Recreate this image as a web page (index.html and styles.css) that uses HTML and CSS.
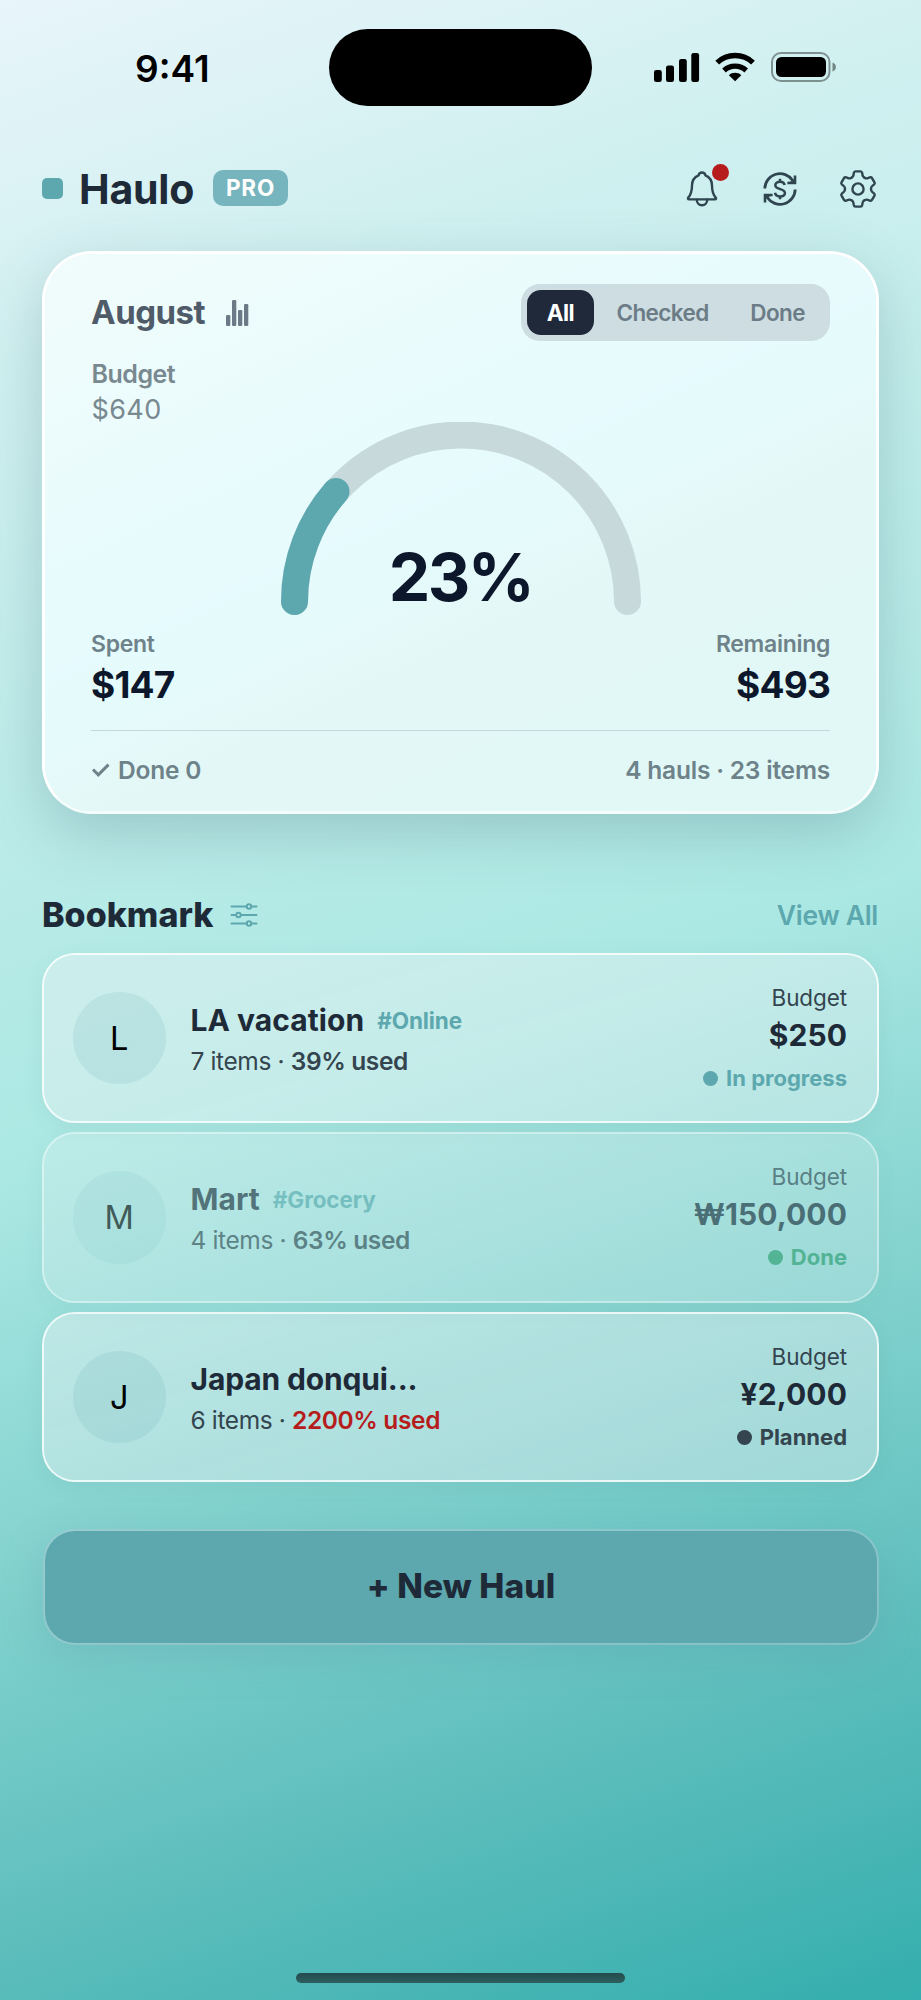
FILE: index.html
```html
<!DOCTYPE html>
<html lang="en">
<head>
<meta charset="utf-8">
<title>Haulo</title>
<link rel="stylesheet" href="styles.css">
</head>
<body>
<main class="screen">
  <div class="status-bar">
    <span class="time">9:41</span>
    <span class="island"></span>
    <svg class="status-icons" width="184" height="32" viewBox="0 0 184 32">
      <rect x="1" y="19" width="7.8" height="12" rx="2.2"/>
      <rect x="13" y="14.5" width="8" height="16.5" rx="2.2"/>
      <rect x="26" y="8" width="7.8" height="23" rx="2.2"/>
      <rect x="38.3" y="2" width="7.8" height="29" rx="2.2"/>
      <g fill="none" stroke="#000" stroke-width="5.4">
        <path d="M64.2 11.6A26 26 0 0 1 100 11.6"/>
        <path d="M71 19.4A16.5 16.5 0 0 1 93.200 19.4"/>
      </g>
      <path d="M82.100 30.300L75.900 24.200C79.300 21 84.900 21 88.300 24.200Z"/>
      <rect x="119" y="2" width="57.500" height="28" rx="9" fill="none" stroke="#000" stroke-opacity=".4" stroke-width="2"/>
      <rect x="123" y="6" width="50" height="20" rx="5.500"/>
      <path d="M179.500 11.500C184 13 184 19 179.500 20.500Z" opacity=".45"/>
    </svg>
  </div>

  <header class="header">
    <span class="logo"></span>
    <h1 class="brand">Haulo</h1>
    <span class="badge">PRO</span>
    <nav class="actions">
      <span class="bell">
        <svg width="32" height="38" viewBox="0 0 32 38" fill="none" stroke="#2f4550" stroke-width="2.400" stroke-linejoin="round" stroke-linecap="round">
          <path d="M16 2.500C14 2.500 12.900 3.800 12.600 5.300C8.300 7 6 10.500 6 15.500C6 21.500 5 24.500 2.300 27.600C1.600 28.500 2 29.400 3 29.400H29C30 29.400 30.400 28.500 29.700 27.600C27 24.500 26 21.500 26 15.500C26 10.500 23.700 7 19.400 5.300C19.100 3.800 18 2.500 16 2.500Z"/>
          <path d="M10.800 29.800C10.800 33 13 35.300 16 35.300C19 35.300 21.200 33 21.200 29.800"/>
        </svg>
        <i class="alert-dot"></i>
      </span>
      <svg class="exchange" width="36" height="36" viewBox="-18 -18 36 36" fill="none" stroke="#2f4550">
        <g id="turn">
          <path d="M-15.200 -.500A15.200 15.200 0 0 1 12.700 -8.500" stroke-width="2.800"/>
          <path d="M16.300 -13.500V-4.800H7.400V-7.200L10.500 -7.600L13.700 -9.800V-13.500Z" fill="#2f4550" stroke="none"/>
        </g>
        <use href="#turn" transform="rotate(180)"/>
        <path d="M4.700 -3.900C4.200 -6.200 2.500 -7.200 0 -7.200C-2.800 -7.200 -4.700 -5.900 -4.700 -3.700C-4.700 1.200 4.900 -.900 4.900 3.900C4.900 6.100 2.900 7.400 0 7.400C-2.700 7.400 -4.600 6.200 -5 3.800M0 -10.200V-7.200M0 7.400V10.200" stroke-width="2.500"/>
      </svg>
      <svg class="gear" width="40" height="40" viewBox="-20 -20 40 40" fill="none" stroke="#2f4550" stroke-width="2.400" stroke-linecap="round">
        <path id="tooth" d="M-6.500 -11.260Q-4.700 -12.200 -4.500 -14L-4.200 -16Q-3.900 -17.600 -2.500 -17.600H2.500Q3.900 -17.600 4.200 -16L4.500 -14Q4.700 -12.200 6.500 -11.260"/>
        <use href="#tooth" transform="rotate(60)"/>
        <use href="#tooth" transform="rotate(120)"/>
        <use href="#tooth" transform="rotate(180)"/>
        <use href="#tooth" transform="rotate(240)"/>
        <use href="#tooth" transform="rotate(300)"/>
        <circle r="5.600"/>
      </svg>
    </nav>
  </header>

  <section class="summary">
    <div class="summary-top">
      <h2 class="month">August</h2>
      <svg class="bars" width="23" height="26" viewBox="0 0 23 26" fill="#6b7a86">
        <rect x="0" y="15" width="4.300" height="11" rx="1.200"/>
        <rect x="6" y="0" width="4.300" height="26" rx="1.200"/>
        <rect x="12" y="10" width="4.300" height="16" rx="1.200"/>
        <rect x="18" y="4" width="4.300" height="22" rx="1.200"/>
      </svg>
      <div class="segmented">
        <span class="seg seg-active">All</span>
        <span class="seg seg-checked">Checked</span>
        <span class="seg seg-done">Done</span>
      </div>
    </div>
    <div class="budget">
      <div class="budget-label">Budget</div>
      <div class="budget-value">$640</div>
    </div>
    <div class="gauge">
      <svg width="360" height="193" viewBox="0 0 360 193" fill="none" stroke-width="27" stroke-linecap="round">
        <path d="M13.500 179.500A166.500 166.500 0 0 1 346.500 179.500" stroke="#c8d9dc"/>
        <path d="M13.500 179.500A166.500 166.500 0 0 1 55 69.500" stroke="#5ca8ae"/>
      </svg>
      <div class="percent">23%</div>
    </div>
    <div class="totals">
      <div>
        <div class="total-label">Spent</div>
        <div class="total-value">$147</div>
      </div>
      <div class="right">
        <div class="total-label">Remaining</div>
        <div class="total-value">$493</div>
      </div>
    </div>
    <div class="summary-foot">
      <span class="done-count">
        <svg width="20" height="16" viewBox="0 0 20 16" fill="none" stroke="#6e828a" stroke-width="3"><path d="M2 7.500L7.300 12.800L17.500 2.600"/></svg>
        Done 0
      </span>
      <span>4 hauls · 23 items</span>
    </div>
  </section>

  <div class="section-head">
    <h2 class="section-title">Bookmark</h2>
    <svg width="28" height="24" viewBox="0 0 28 24" fill="none" stroke="#5ca8ae" stroke-width="2" stroke-linecap="round">
      <path d="M1.500 3.500H16.500M21.500 3.500H26.500M1.500 12H6M11 12H26.500M1.500 20.500H16.500M21.500 20.500H26.500"/>
      <circle cx="19" cy="3.500" r="2.200"/><circle cx="8.500" cy="12" r="2.200"/><circle cx="19" cy="20.500" r="2.200"/>
    </svg>
    <a class="view-all">View All</a>
  </div>

  <div class="list">
    <article class="haul">
      <span class="avatar">L</span>
      <div class="info">
        <div class="title">LA vacation<span class="tag">#Online</span></div>
        <div class="meta">7 items · <b>39% used</b></div>
      </div>
      <div class="side">
        <div class="side-label">Budget</div>
        <div class="amount">$250</div>
        <div class="state state-progress"><i class="dot"></i>In progress</div>
      </div>
    </article>
    <article class="haul haul-done">
      <span class="avatar">M</span>
      <div class="info">
        <div class="title">Mart<span class="tag">#Grocery</span></div>
        <div class="meta">4 items · <b>63% used</b></div>
      </div>
      <div class="side">
        <div class="side-label">Budget</div>
        <div class="amount">₩150,000</div>
        <div class="state state-done"><i class="dot"></i>Done</div>
      </div>
    </article>
    <article class="haul">
      <span class="avatar">J</span>
      <div class="info">
        <div class="title title-long">Japan donqui...</div>
        <div class="meta">6 items · <b class="over">2200% used</b></div>
      </div>
      <div class="side">
        <div class="side-label">Budget</div>
        <div class="amount">¥2,000</div>
        <div class="state state-planned"><i class="dot"></i>Planned</div>
      </div>
    </article>
  </div>

  <div class="new-haul">+ New Haul</div>
  <div class="home-indicator"></div>
</main>
</body>
</html>
```

FILE: styles.css
```css
* { box-sizing: border-box; }
body { margin: 0; }
h1, h2 { margin: 0; }
svg { display: block; flex: none; }

.screen {
  width: 921px;
  height: 2000px;
  padding: 0 42px;
  display: flex;
  flex-direction: column;
  overflow: hidden;
  font-family: Inter, "Liberation Sans", sans-serif;
  color: #1e2a38;
  white-space: nowrap;
  background: linear-gradient(161deg, #e8f5fb 0%, #d0f0f0 16%, #abe8e3 51%, #5bbdbb 85%, #34aeae 100%);
}

.status-bar {
  height: 137px;
  flex: none;
  display: flex;
  align-items: flex-start;
  color: #000;
}
.time {
  width: 287px;
  padding-left: 93px;
  margin-top: 49px;
  font-size: 37px;
  line-height: 40px;
  font-weight: 560;
}
.island {
  width: 263px;
  height: 77px;
  margin-top: 29px;
  border-radius: 39px;
  background: #000;
}
.status-icons { margin: 51px 0 0 61px; }

.header {
  height: 103px;
  flex: none;
  display: flex;
  align-items: center;
}
.logo {
  width: 21px;
  height: 21px;
  border-radius: 5px;
  background: #5ca8ae;
}
.brand {
  margin-left: 16px;
  width: 134px;
  font-size: 41px;
  line-height: 50px;
  font-weight: 750;
  letter-spacing: -0.2px;
}
.badge {
  width: 75px;
  height: 36px;
  margin-bottom: 1px;
  border-radius: 10px;
  background: #76b5bd;
  color: #fff;
  font-size: 22.5px;
  line-height: 36px;
  font-weight: 750;
  letter-spacing: 0.8px;
  text-align: center;
}
.actions {
  margin-left: auto;
  margin-right: 1px;
  display: flex;
  align-items: center;
}
.bell { position: relative; margin-right: 44px; }
.alert-dot {
  position: absolute;
  left: 25.5px;
  top: -6px;
  width: 17px;
  height: 17px;
  border-radius: 50%;
  background: #b71c1c;
}
.gear { margin-left: 40px; }

.summary {
  margin-top: 11px;
  height: 562.5px;
  flex: none;
  padding: 30px 46px 0 46px;
  border: 3px solid #fff;
  border-bottom-color: rgba(255, 255, 255, .85);
  border-radius: 50px;
  background: linear-gradient(155deg, #f1fcfb 0%, #e6fbfd 45%, #e3f8f6 62%, #e0f8f6 100%);
  background-clip: padding-box;
  box-shadow: 0 19px 56px rgba(60, 100, 110, .25);
}
.summary-top {
  display: flex;
  align-items: center;
  height: 57px;
}
.month {
  width: 135px;
  font-size: 33px;
  line-height: 40px;
  padding-bottom: 1px;
  font-weight: 700;
  letter-spacing: -0.5px;
  color: #4f5b68;
}
.bars { margin-top: 1px; }
.segmented {
  margin-left: auto;
  width: 309px;
  height: 57px;
  padding: 6px;
  display: flex;
  border-radius: 19px;
  background: #cddde2;
  font-size: 22.5px;
  line-height: 45px;
  font-weight: 600;
  letter-spacing: -0.6px;
  color: #6b7c86;
}
.seg { text-align: center; }
.seg-active {
  width: 67px;
  border-radius: 14px;
  background: #20293a;
  color: #fff;
  font-weight: 700;
}
.seg-checked { width: 138px; }
.seg-done { width: 93px; }

.budget {
  margin-top: 15.5px;
  padding-left: 0.5px;
  color: #788990;
}
.budget-label { font-size: 25px; line-height: 34px; font-weight: 560; letter-spacing: -0.5px; }
.budget-value { font-size: 27px; line-height: 37px; letter-spacing: 0.4px; }

.gauge {
  display: grid;
  justify-items: center;
  align-items: end;
  margin-top: -5.5px;
}
.gauge > * { grid-area: 1 / 1; }
.percent {
  font-size: 66px;
  line-height: 76px;
  font-weight: 750;
  letter-spacing: -2.6px;
  color: #0d172b;
}

.totals {
  margin-top: 14px;
  padding-bottom: 20px;
  display: flex;
  justify-content: space-between;
  border-bottom: 1px solid #c3d9db;
}
.right { text-align: right; }
.total-label {
  font-size: 23px;
  line-height: 30px;
  font-weight: 600;
  letter-spacing: -0.3px;
  color: #6e828a;
}
.total-value {
  font-size: 37px;
  line-height: 51px;
  font-weight: 750;
  letter-spacing: -0.8px;
  color: #0d172b;
}
.summary-foot {
  height: 77px;
  display: flex;
  align-items: center;
  justify-content: space-between;
  font-size: 24.5px;
  font-weight: 560;
  letter-spacing: -0.2px;
  color: #6e828a;
}
.done-count { display: flex; align-items: center; gap: 7px; }

.section-head {
  margin-top: 63.5px;
  height: 75.5px;
  flex: none;
  display: flex;
  align-items: center;
}
.section-title {
  width: 188px;
  font-size: 34px;
  line-height: 40px;
  font-weight: 800;
  letter-spacing: 0;
}
.view-all {
  margin-left: auto;
  margin-right: 1px;
  font-size: 26.5px;
  font-weight: 560;
  letter-spacing: -0.3px;
  color: #5ca8ae;
}

.list {
  display: flex;
  flex-direction: column;
  gap: 9px;
  flex: none;
}
.haul {
  height: 170.5px;
  display: flex;
  align-items: center;
  padding: 0 30px 0 29px;
  border: 2px solid rgba(255, 255, 255, .85);
  border-radius: 33px;
  background: linear-gradient(165deg, rgba(240, 244, 246, .4), rgba(240, 244, 246, .38));
  background-clip: padding-box;
  box-shadow: 0 5px 19px rgba(60, 110, 120, .08);
}
.haul-done { opacity: .6; }
.avatar {
  width: 92.5px;
  height: 92.5px;
  flex: none;
  border-radius: 50%;
  background: rgba(92, 168, 174, .15);
  color: #000;
  font-size: 32.5px;
  line-height: 93px;
  text-align: center;
}
.info { margin-left: 25px; padding-top: 5px; }
.title {
  display: flex;
  align-items: center;
  font-size: 30px;
  line-height: 41px;
  font-weight: 700;
  letter-spacing: 0.05px;
}
.title-long { letter-spacing: -0.15px; }
.tag {
  margin-left: 13px;
  font-size: 22.5px;
  font-weight: 660;
  letter-spacing: -0.1px;
  color: #5ca8ae;
}
.meta {
  font-size: 24.5px;
  line-height: 40px;
  letter-spacing: -0.38px;
  color: #34454f;
}
.meta b { font-weight: 600; }
.meta .over { color: #b71c1c; }
.side { margin-left: auto; padding-top: 6px; text-align: right; }
.side-label { font-size: 22.5px; line-height: 34px; letter-spacing: -0.1px; color: #34454f; }
.amount { font-size: 30px; line-height: 41px; font-weight: 700; letter-spacing: 0.1px; }
.state {
  display: flex;
  align-items: center;
  justify-content: flex-end;
  gap: 8px;
  font-size: 22px;
  line-height: 45px;
  font-weight: 700;
}
.state-progress { color: #5ca8ae; }
.state-done { color: #2f9e6e; }
.state-planned { color: #34454f; }
.dot {
  width: 15px;
  height: 15px;
  border-radius: 50%;
  background: currentColor;
}

.new-haul {
  margin: 46.5px 0 0 1px;
  height: 116px;
  flex: none;
  border: 2px solid rgba(170, 200, 210, .5);
  border-radius: 32px;
  background: #5ca8ae;
  background-clip: padding-box;
  box-shadow: 0 12px 40px rgba(92, 150, 165, .28);
  font-size: 33.5px;
  line-height: 111px;
  font-weight: 800;
  letter-spacing: 0.1px;
  text-align: center;
}

.home-indicator {
  width: 329px;
  height: 10px;
  flex: none;
  margin: auto auto 17px;
  border-radius: 5px;
  background: linear-gradient(#234a4c, #2d6060);
}
```
